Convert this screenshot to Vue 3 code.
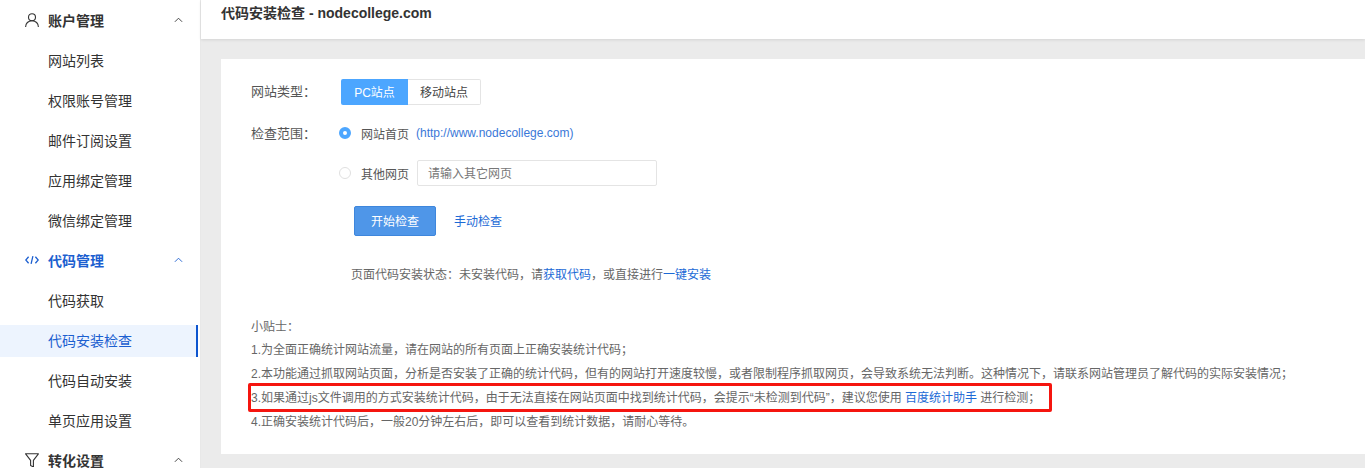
<script setup>
const accountItems = ['网站列表', '权限账号管理', '邮件订阅设置', '应用绑定管理', '微信绑定管理']
const codeItems = [
  { label: '代码获取' },
  { label: '代码安装检查', active: true },
  { label: '代码自动安装' },
  { label: '单页应用设置' },
]
</script>

<template>
  <div class="page">
    <aside class="side">
      <div class="group-title">
        <svg class="ico" viewBox="0 0 14 14" fill="none" stroke="currentColor" stroke-width="1.1">
          <circle cx="7" cy="4.2" r="3.5" />
          <path d="M.6 14c0-3.6 2.6-6.3 6.4-6.3s6.4 2.7 6.4 6.3" />
        </svg>
        <span class="gt">账户管理</span>
        <svg class="chev" viewBox="0 0 10 6" fill="none" stroke="currentColor" stroke-width="1"><path d="M1 5l4-4 4 4" /></svg>
      </div>
      <div v-for="i in accountItems" :key="i" class="item">{{ i }}</div>

      <div class="group-title blue">
        <svg class="ico" viewBox="0 0 14 14" fill="none" stroke="currentColor" stroke-width="1.3">
          <path d="M3.6 3.8L.8 7l2.8 3.2M10.4 3.8L13.2 7l-2.8 3.2M7.9 3.2L6.1 10.8" />
        </svg>
        <span class="gt">代码管理</span>
        <svg class="chev" viewBox="0 0 10 6" fill="none" stroke="currentColor" stroke-width="1"><path d="M1 5l4-4 4 4" /></svg>
      </div>
      <div v-for="i in codeItems" :key="i.label" class="item" :class="{ active: i.active }">
        <span class="item-in">{{ i.label }}</span>
      </div>

      <div class="group-title">
        <svg class="ico" viewBox="0 0 14 14" fill="none" stroke="currentColor" stroke-width="1.1">
          <path d="M.6 .8h12.8L8.4 7.4V14L5.6 12.4V7.4z" stroke-linejoin="round" />
        </svg>
        <span class="gt">转化设置</span>
        <svg class="chev" viewBox="0 0 10 6" fill="none" stroke="currentColor" stroke-width="1"><path d="M1 5l4-4 4 4" /></svg>
      </div>
    </aside>

    <main class="main">
      <header class="head">代码安装检查 - nodecollege.com</header>
      <section class="card">
        <div class="row type-row">
          <span class="label">网站类型：</span>
          <div class="tabs">
            <span class="tab on">PC站点</span>
            <span class="tab">移动站点</span>
          </div>
        </div>
        <div class="row range-row">
          <span class="label">检查范围：</span>
          <span class="radio checked"></span>
          <span class="rtext">网站首页</span>
          <span class="url">(http://www.nodecollege.com)</span>
        </div>
        <div class="row other-row">
          <span class="radio"></span>
          <span class="rtext">其他网页</span>
          <span class="input">请输入其它网页</span>
        </div>
        <div class="row act-row">
          <span class="btn">开始检查</span>
          <a class="link manual">手动检查</a>
        </div>
        <p class="status">页面代码安装状态：未安装代码，请<a class="link">获取代码</a>，或直接进行<a class="link">一键安装</a></p>
        <div class="tips">
          <p class="tips-head">小贴士：</p>
          <p>1.为全面正确统计网站流量，请在网站的所有页面上正确安装统计代码；</p>
          <p>2.本功能通过抓取网站页面，分析是否安装了正确的统计代码，但有的网站打开速度较慢，或者限制程序抓取网页，会导致系统无法判断。这种情况下，请联系网站管理员了解代码的实际安装情况；</p>
          <p class="mark">3.如果通过js文件调用的方式安装统计代码，由于无法直接在网站页面中找到统计代码，会提示“未检测到代码”，建议您使用 <a class="link">百度统计助手</a> 进行检测；<span class="redbox"></span></p>
          <p>4.正确安装统计代码后，一般20分钟左右后，即可以查看到统计数据，请耐心等待。</p>
        </div>
      </section>
    </main>
  </div>
</template>

<style>
html, body { margin: 0; background: #ebebeb; }
</style>

<style scoped>
.page {
  display: flex;
  width: 1365px;
  height: 468px;
  overflow: hidden;
  font-family: "Liberation Sans", "Noto Sans CJK SC", sans-serif;
  color: #333;
}
.side {
  flex: 0 0 201px;
  box-sizing: border-box;
  background: #fff;
  border-right: 1px solid #e8e8e8;
  height: 468px;
  overflow: hidden;
}
.group-title {
  display: flex;
  align-items: center;
  height: 40px;
  padding-left: 25px;
  font-size: 14px;
  color: #333;
}
.group-title.blue { color: #1c5fd0; }
.gt { margin-left: 9px; font-weight: 700; }
.ico { width: 14px; height: 14px; flex: none; }
.chev { width: 9px; height: 6px; margin-left: 70px; flex: none; }
.item {
  display: flex;
  align-items: center;
  height: 40px;
  padding-left: 48px;
  font-size: 14px;
  color: #333;
  position: relative;
}
.item.active { color: #1c5fd0; }
.item.active::before {
  content: "";
  position: absolute;
  left: 0;
  right: 2px;
  top: 5px;
  bottom: 3px;
  background: #edf4fe;
  border-right: 2px solid #0d55cf;
}
.item-in { position: relative; }
.main { flex: 1; min-width: 0; }
.head {
  box-sizing: border-box;
  height: 39px;
  padding: 5px 0 0 20px;
  background: #fff;
  font-size: 14px;
  font-weight: 700;
  color: #333;
  line-height: 16px;
  box-shadow: 0 1px 3px rgba(0, 0, 0, 0.1);
  position: relative;
}
.card {
  box-sizing: border-box;
  margin: 20px 0 0 20px;
  height: 395px;
  padding: 20px 0 0 30px;
  background: #fff;
}
.row { display: flex; align-items: center; font-size: 13px; }
.label { color: #555; width: 90px; flex: none; font-size: 13px; }
.type-row { height: 26px; }
.type-row .label { padding-bottom: 4px; }
.tabs { display: flex; height: 26px; }
.tab {
  box-sizing: border-box;
  display: flex;
  align-items: center;
  justify-content: center;
  width: 73px;
  padding-bottom: 2px;
  font-size: 12px;
  color: #444;
  border: 1px solid #e4e4e4;
  border-left: 0;
  border-radius: 0 2px 2px 0;
}
.tab.on {
  width: 67px;
  background: #4ca6ff;
  border: 0;
  color: #fff;
  border-radius: 2px 0 0 2px;
}
.range-row { margin-top: 15px; height: 26px; }
.range-row .label { width: 88px; padding-bottom: 2px; }
.radio {
  box-sizing: border-box;
  width: 12px;
  height: 12px;
  border: 1px solid #e0e0e0;
  border-radius: 50%;
  flex: none;
}
.radio.checked {
  border: 4px solid #4ca6ff;
  background: #fff;
}
.rtext { margin-left: 10px; font-size: 12px; color: #555; }
.url { margin-left: 7px; font-size: 12px; color: #3a78d8; }
.other-row { margin-top: 14px; height: 26px; padding-left: 88px; }
.input {
  box-sizing: border-box;
  width: 240px;
  height: 26px;
  margin-left: 8px;
  padding: 0 0 2px 10px;
  display: flex;
  align-items: center;
  border: 1px solid #e4e4e4;
  border-radius: 2px;
  font-size: 12px;
  color: #777;
}
.act-row { margin-top: 20px; padding-left: 103px; }
.btn {
  box-sizing: border-box;
  width: 82px;
  height: 30px;
  padding-bottom: 2px;
  display: flex;
  align-items: center;
  justify-content: center;
  background: #4f96e8;
  border: 1px solid #3e86dc;
  border-radius: 2px;
  color: #fff;
  font-size: 12px;
}
.link { color: #1c6ad6; }
.manual { margin-left: 18px; margin-top: -2px; font-size: 12px; }
.status {
  margin: 0;
  margin-top: 31px;
  padding-left: 100px;
  font-size: 12px;
  line-height: 16px;
  color: #666;
}
.tips { margin-top: 31px; font-size: 12px; color: #666; }
.tips p { margin: 0; line-height: 24px; white-space: nowrap; }
.tips .tips-head { position: relative; top: 1px; }
.mark { position: relative; }
.redbox {
  position: absolute;
  left: -3px;
  top: -3px;
  width: 804px;
  height: 29px;
  box-sizing: border-box;
  border: 3px solid #f5150f;
  border-radius: 2px;
}
</style>
